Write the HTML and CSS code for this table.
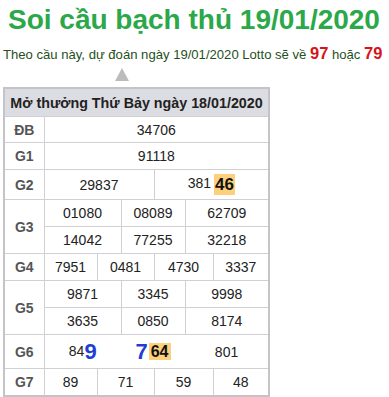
FILE: index.html
```html
<!DOCTYPE html>
<html lang="vi">
<head>
<meta charset="utf-8">
<link rel="stylesheet" href="styles.css">
</head>
<body>
<h1 class="title">Soi cầu bạch thủ 19/01/2020</h1>
<p class="subtitle">Theo cầu này, dự đoán ngày 19/01/2020 Lotto sẽ về <b class="red">97</b> hoặc <b class="red">79</b></p>
<div class="arrow"></div>
<table class="kq">
  <colgroup>
    <col class="c0"><col class="c1"><col class="c2"><col class="c3"><col class="c4"><col class="c5"><col class="c6">
  </colgroup>
  <tr class="head"><th colspan="7">Mở thưởng Thứ Bảy ngày 18/01/2020</th></tr>
  <tr class="r26"><td class="lbl">ĐB</td><td colspan="6">34706</td></tr>
  <tr class="r27"><td class="lbl">G1</td><td colspan="6">91118</td></tr>
  <tr class="r30"><td class="lbl">G2</td><td colspan="3">29837</td><td colspan="3">381<span class="hl">46</span></td></tr>
  <tr class="r27"><td class="lbl" rowspan="2">G3</td><td colspan="2">01080</td><td colspan="2">08089</td><td colspan="2">62709</td></tr>
  <tr class="r27"><td colspan="2">14042</td><td colspan="2">77255</td><td colspan="2">32218</td></tr>
  <tr class="r27"><td class="lbl">G4</td><td>7951</td><td colspan="2">0481</td><td colspan="2">4730</td><td>3337</td></tr>
  <tr class="r27"><td class="lbl" rowspan="2">G5</td><td colspan="2">9871</td><td colspan="2">3345</td><td colspan="2">9998</td></tr>
  <tr class="r27"><td colspan="2">3635</td><td colspan="2">0850</td><td colspan="2">8174</td></tr>
  <tr class="r34 g6"><td class="lbl">G6</td><td colspan="2">84<span class="blue">9</span></td><td colspan="2"><span class="blue">7</span><span class="hl hl2">64</span></td><td colspan="2">801</td></tr>
  <tr class="r27"><td class="lbl">G7</td><td>89</td><td colspan="2">71</td><td colspan="2">59</td><td>48</td></tr>
</table>
</body>
</html>
```

FILE: styles.css
```css
html, body {
  margin: 0;
  padding: 0;
  background: #fff;
}
body {
  font-family: "Liberation Sans", Arial, sans-serif;
  color: #222;
}
.title {
  margin: 0;
  padding: 4px 0 0 8px;
  font-size: 28px;
  line-height: 32px;
  font-weight: bold;
  color: #2aa84a;
  white-space: nowrap;
}
.subtitle {
  margin: 8px 0 0 0;
  padding-left: 3px;
  font-size: 13.1px;
  line-height: 18px;
  color: #1f4f22;
  white-space: nowrap;
}
.red {
  color: #d8141a;
  font-size: 16.5px;
}
.arrow {
  width: 0;
  height: 0;
  margin: 4px 0 0 115px;
  border-left: 7px solid transparent;
  border-right: 7px solid transparent;
  border-bottom: 13px solid #bcbcbc;
}
.kq {
  margin: 6px 0 0 3px;
  width: 265px;
  table-layout: fixed;
  border-collapse: collapse;
  border: 2px solid #c4c4c8;
  font-size: 14px;
}
.c0 { width: 40px; }
.c1 { width: 53px; }
.c2 { width: 24px; }
.c3 { width: 33px; }
.c4 { width: 31px; }
.c5 { width: 28px; }
.c6 { width: 56px; }
.kq th, .kq td {
  border: 1px solid #cfcfd4;
  padding: 0;
  text-align: center;
  vertical-align: middle;
  color: #222;
}
.kq .head th {
  height: 27px;
  background: #dcdde3;
  font-weight: bold;
  color: #222;
  font-size: 14.3px;
  white-space: nowrap;
}
.kq td.lbl {
  font-weight: bold;
  color: #555;
}
.r26 td { height: 25px; }
.r27 td { height: 26px; }
.r30 td { height: 29px; }
.r34 td { height: 33px; }
.g6 td { border-left: none; border-right: none; }
.g6 td.lbl { border-right: 1px solid #cfcfd4; }
.hl {
  display: inline-block;
  margin-left: 3px;
  padding: 0 1px;
  line-height: 21px;
  background: #fcd07c;
  font-weight: bold;
  font-size: 17px;
  color: #111;
  vertical-align: middle;
}
.hl2 {
  margin-left: 1px;
  line-height: 17px;
  font-size: 16px;
  padding: 0 2px;
}
.blue {
  color: #1f3fd4;
  font-weight: bold;
  font-size: 22px;
  vertical-align: middle;
}
```
